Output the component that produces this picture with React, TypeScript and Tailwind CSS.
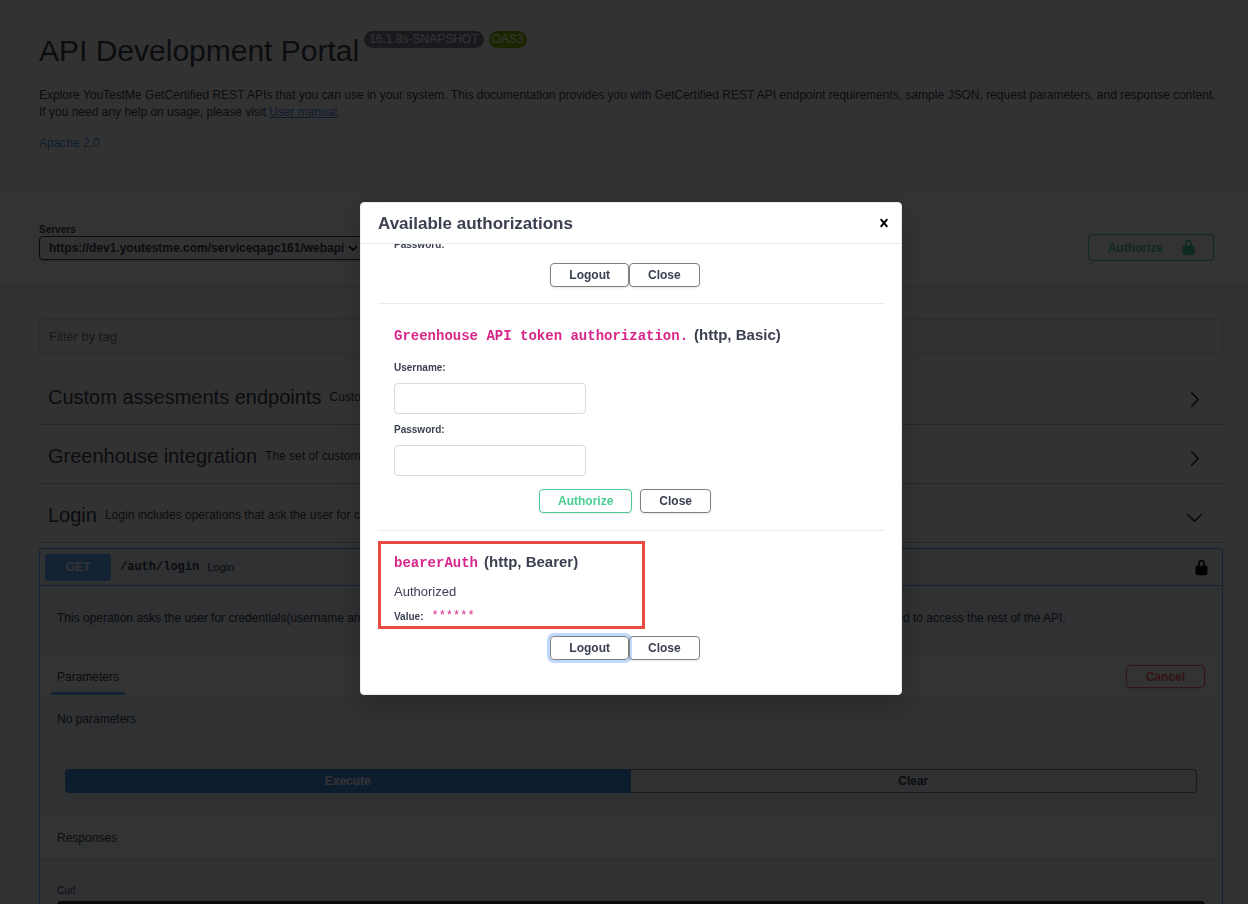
import { useState } from "react"
import type { ReactNode } from "react"
import clsx from "clsx"

function LockIcon({ className }: { className?: string }) {
    return (
        <svg viewBox="0 0 20 20" className={clsx("size-[17px] fill-current", className)} aria-hidden="true">
            <path d="M15.8 8H14V5.6C14 2.703 12.665 1 10 1 7.334 1 6 2.703 6 5.6V8H4c-.553 0-1 .646-1 1.199V17c0 .549.428 1.139.951 1.307l1.197.387C5.672 18.861 6.55 19 7.1 19h5.8c.549 0 1.428-.139 1.951-.307l1.196-.387c.524-.167.953-.757.953-1.306V9.199C17 8.646 16.352 8 15.8 8zM12 8H8V5.199C8 3.754 8.797 3 10 3c1.203 0 2 .754 2 2.199V8z" />
        </svg>
    )
}

function ArrowIcon({ open }: { open?: boolean }) {
    return (
        <svg viewBox="0 0 20 20" className="size-[17px] fill-black" aria-hidden="true">
            {open ? (
                <path d="M17.418 6.109c.272-.268.709-.268.979 0s.271.701 0 .969l-7.908 7.83c-.27.268-.707.268-.979 0l-7.908-7.83c-.27-.268-.27-.701 0-.969.271-.268.709-.268.979 0L10 13.25l7.418-7.141z" />
            ) : (
                <path d="M13.25 10L6.109 2.58c-.268-.27-.268-.707 0-.979.268-.27.701-.27.969 0l7.83 7.908c.268.271.268.709 0 .979l-7.83 7.908c-.268.271-.701.27-.969 0-.268-.269-.268-.707 0-.979L13.25 10z" />
            )}
        </svg>
    )
}

function CloseIcon() {
    return (
        <svg viewBox="0 0 20 20" className="size-4 fill-black" aria-hidden="true">
            <path d="M14.348 14.849c-.469.469-1.229.469-1.697 0L10 11.819l-2.651 3.029c-.469.469-1.229.469-1.697 0-.469-.469-.469-1.229 0-1.697l2.758-3.15-2.759-3.152c-.469-.469-.469-1.228 0-1.697.469-.469 1.228-.469 1.697 0L10 8.183l2.651-3.031c.469-.469 1.228-.469 1.697 0 .469.469.469 1.229 0 1.697l-2.758 3.152 2.758 3.15c.469.469.469 1.229 0 1.698z" />
        </svg>
    )
}

interface ButtonProps {
    children: ReactNode
    className?: string
    onClick?: () => void
}

function Button({ children, className, onClick }: ButtonProps) {
    return (
        <button
            type="button"
            onClick={onClick}
            className={clsx(
                "rounded border text-xs font-bold shadow-[0_1px_2px_rgba(0,0,0,0.1)]",
                className
            )}
        >
            {children}
        </button>
    )
}

const plain = "h-6 border-[#808080] px-[18px]"

interface TagProps {
    name: string
    description: string
    open?: boolean
}

function Tag({ name, description, open }: TagProps) {
    return (
        <button type="button" className="flex h-[59px] w-full items-center border-b border-[rgba(59,65,81,0.3)] pt-1 pr-5 pl-[9px] text-left">
            <span className="text-xl">{name}</span>
            <span className="flex-1 truncate pl-2 text-xs">{description}</span>
            <span className="pt-1"><ArrowIcon open={open} /></span>
        </button>
    )
}

function AuthTitle({ name, type }: { name: string; type: string }) {
    return (
        <h4 className="flex items-baseline gap-[6px] text-[15px] leading-5 font-bold">
            <code className="font-['Liberation_Mono',monospace] text-sm leading-5 text-[#d9268a]">{name}</code>
            <span>{type}</span>
        </h4>
    )
}

function AuthInput({ label, id, type }: { label: string; id: string; type: string }) {
    return (
        <div>
            <label htmlFor={id} className="block text-[10px] leading-4 font-bold">{label}</label>
            <input id={id} type={type} className="mt-[7px] block h-[31px] w-48 rounded border border-[#d9d9d9] bg-white px-2 text-sm" />
        </div>
    )
}

function AuthModal({ onClose }: { onClose: () => void }) {
    return (
        <div className="fixed inset-0 flex items-center justify-center bg-black/80 pb-[7px] pl-[14px]">
            <div role="dialog" aria-label="Available authorizations" className="w-full max-w-[542px] rounded border border-[#ebebeb] bg-white shadow-[0_10px_30px_rgba(0,0,0,0.2)]">
                <div className="flex h-[41px] items-center justify-between border-b border-[#ebebeb] pr-[9px] pl-[17px]">
                    <h3 className="pt-[2px] text-[17px] leading-6 font-bold">Available authorizations</h3>
                    <button type="button" aria-label="Close dialog" onClick={onClose}><CloseIcon /></button>
                </div>
                {/* list is kept at its end, the first schemes are cut off above */}
                <div className="flex h-[450px] flex-col justify-end overflow-hidden px-[17px]">
                    <div className="border-b border-[#ebebeb] px-4 pb-4">
                        <div className="text-[10px] leading-4 font-bold">Password:</div>
                        <div className="mt-[10px] flex justify-center pr-3">
                            <Button className={plain}>Logout</Button>
                            <Button className={plain} onClick={onClose}>Close</Button>
                        </div>
                    </div>
                    <div className="border-b border-[#ebebeb] px-4 pt-[21px] pb-[17px]">
                        <AuthTitle name="Greenhouse API token authorization." type="(http, Basic)" />
                        <form className="mt-[14px] flex flex-col gap-2">
                            <AuthInput id="username" label="Username:" type="text" />
                            <AuthInput id="password" label="Password:" type="password" />
                            <div className="flex justify-center gap-2 pt-[5px] pr-3">
                                <Button className="h-6 border-[#49cc90] px-[18px] text-[#49cc90]">Authorize</Button>
                                <Button className={plain} onClick={onClose}>Close</Button>
                            </div>
                        </form>
                    </div>
                    <div className="pt-[10px] pb-[34px]">
                        <div className="w-[267px] border-[3px] border-[#e94b43] px-[13px] pt-2">
                            <AuthTitle name="bearerAuth" type="(http, Bearer)" />
                            <p className="mt-[9px] text-[13px] leading-5">Authorized</p>
                            <div className="mt-1 flex h-5 items-center gap-2">
                                <span className="text-[10px] font-bold">Value:</span>
                                <code className="font-['Liberation_Mono',monospace] text-xs text-[#d9268a]">******</code>
                            </div>
                        </div>
                        <div className="mt-[7px] flex justify-center pr-3">
                            <Button className="h-6 border-[#808080] px-[18px] ring-3 ring-[#c0d9fc]">Logout</Button>
                            <Button className={plain} onClick={onClose}>Close</Button>
                        </div>
                    </div>
                </div>
            </div>
        </div>
    )
}

function Operation() {
    return (
        <section className="mt-[5px] rounded border border-[#61affe] bg-[#61affe]/10 shadow-[0_0_3px_rgba(0,0,0,0.19)]">
            <div className="flex h-[37px] items-center border-b border-[#61affe] pr-3 pl-[5px]">
                <span className="w-[66px] rounded-[3px] bg-[#61affe] text-center text-xs leading-[27px] font-bold text-white">GET</span>
                <span className="pl-[9px] font-['Liberation_Mono',monospace] text-xs font-bold">/auth/login</span>
                <span className="flex-1 pl-2 text-[11px]">Login</span>
                <button type="button" aria-label="authorization button locked"><LockIcon className="text-black" /></button>
            </div>
            <p className="truncate px-[17px] pt-6 pb-[29px] text-xs leading-[17px]">
                This operation asks the user for credentials(username and password) and, when both are valid, it returns the token in the response body. This token is later used to access the rest of the API.
            </p>
            <div className="flex h-[42px] items-center justify-between border-b border-black/10 bg-white/80 pr-[17px] pl-[11px]">
                <h4 className="mb-[2px] self-end border-b-[3px] border-[#61affe] px-[6px] pb-[7px] text-xs">Parameters</h4>
                <Button className="h-[23px] border-[#ff6060] px-[19px] text-[#ff6060]">Cancel</Button>
            </div>
            <p className="px-[17px] pt-[13px] text-xs leading-[17px]">No parameters</p>
            <div className="flex px-[25px] pt-[41px] pb-6 text-xs font-bold">
                <button type="button" className="h-6 flex-1 rounded-l bg-[#4990e2] text-white">Execute</button>
                <button type="button" className="h-6 flex-1 rounded-r border border-l-0 border-[#808080]">Clear</button>
            </div>
            <h4 className="border-b border-black/10 bg-white/80 px-[17px] text-xs leading-[42px]">Responses</h4>
            <div className="px-[17px] pt-[22px]">
                <h5 className="mb-[2px] text-[10px] leading-[17px]">Curl</h5>
                <pre className="h-40 rounded bg-[#333]"></pre>
            </div>
        </section>
    )
}

export default function App() {
    const [showModal, setShowModal] = useState(true)

    return (
        <div className={clsx("bg-[#fafafa] font-['Liberation_Sans',Arial,sans-serif] text-[#3b4151]", showModal && "h-screen overflow-hidden")}>
            <header className="pt-[31px] pr-[25px] pb-[43px] pl-[39px] text-xs">
                <div className="flex items-start gap-[5px]">
                    <h1 className="text-3xl leading-10">API Development Portal</h1>
                    <span className="rounded-full bg-[#7d8492] px-[5px] leading-[17px] text-white">16.1.8s-SNAPSHOT</span>
                    <span className="rounded-full bg-[#89bf04] px-[3px] leading-[17px] text-white">OAS3</span>
                </div>
                <p className="mt-4 leading-[17px]">
                    Explore YouTestMe GetCertified REST APIs that you can use in your system. This documentation provides you with GetCertified REST API endpoint requirements, sample JSON, request parameters, and response content. If you need any help on usage, please visit <a href="#manual" className="text-[#4990e2] underline">User manual</a>.
                </p>
                <a href="#license" className="mt-[14px] block leading-[17px] text-[#4990e2]">Apache 2.0</a>
            </header>

            <div className="flex items-start justify-between bg-white pt-[29px] pr-[34px] pb-[25px] pl-[39px] shadow-[0_1px_2px_rgba(0,0,0,0.15)]">
                <div>
                    <label htmlFor="servers" className="block text-[10px] leading-3 font-bold">Servers</label>
                    <div className="relative">
                        <select id="servers" className="block h-6 w-[330px] appearance-none rounded border border-[#41444e] bg-[#f7f7f7] pl-[9px] text-xs font-bold shadow-[0_1px_2px_rgba(0,0,0,0.25)]">
                            <option>https://dev1.youtestme.com/serviceqagc161/webapi</option>
                        </select>
                        <svg viewBox="0 0 10 10" className="absolute top-[7px] left-[309px] size-[10px]" fill="none" stroke="#000" strokeWidth="1.6" aria-hidden="true">
                            <path d="M1 3l4 4 4-4" />
                        </svg>
                    </div>
                </div>
                <button type="button" onClick={() => setShowModal(true)} className="mt-[10px] flex h-[27px] items-center gap-[17px] rounded border border-[#49cc90] pr-4 pl-[19px] text-xs font-bold text-[#49cc90]">
                    Authorize
                    <LockIcon />
                </button>
            </div>

            <main className="pt-[33px] pr-[25px] pl-[39px]">
                <input type="text" aria-label="Filter by tag" placeholder="Filter by tag" className="mb-3 block h-[35px] w-full rounded border border-[#d8dde7] bg-[#fafafa] px-[9px] text-[13px] placeholder:text-[#757575]" />
                <Tag name="Custom assesments endpoints" description="Custom assesments endpoints" />
                <Tag name="Greenhouse integration" description="The set of custom endpoints for the Greenhouse integration" />
                <Tag name="Login" description="Login includes operations that ask the user for credentials" open />
                <Operation />
            </main>

            {showModal && <AuthModal onClose={() => setShowModal(false)} />}
        </div>
    )
}
